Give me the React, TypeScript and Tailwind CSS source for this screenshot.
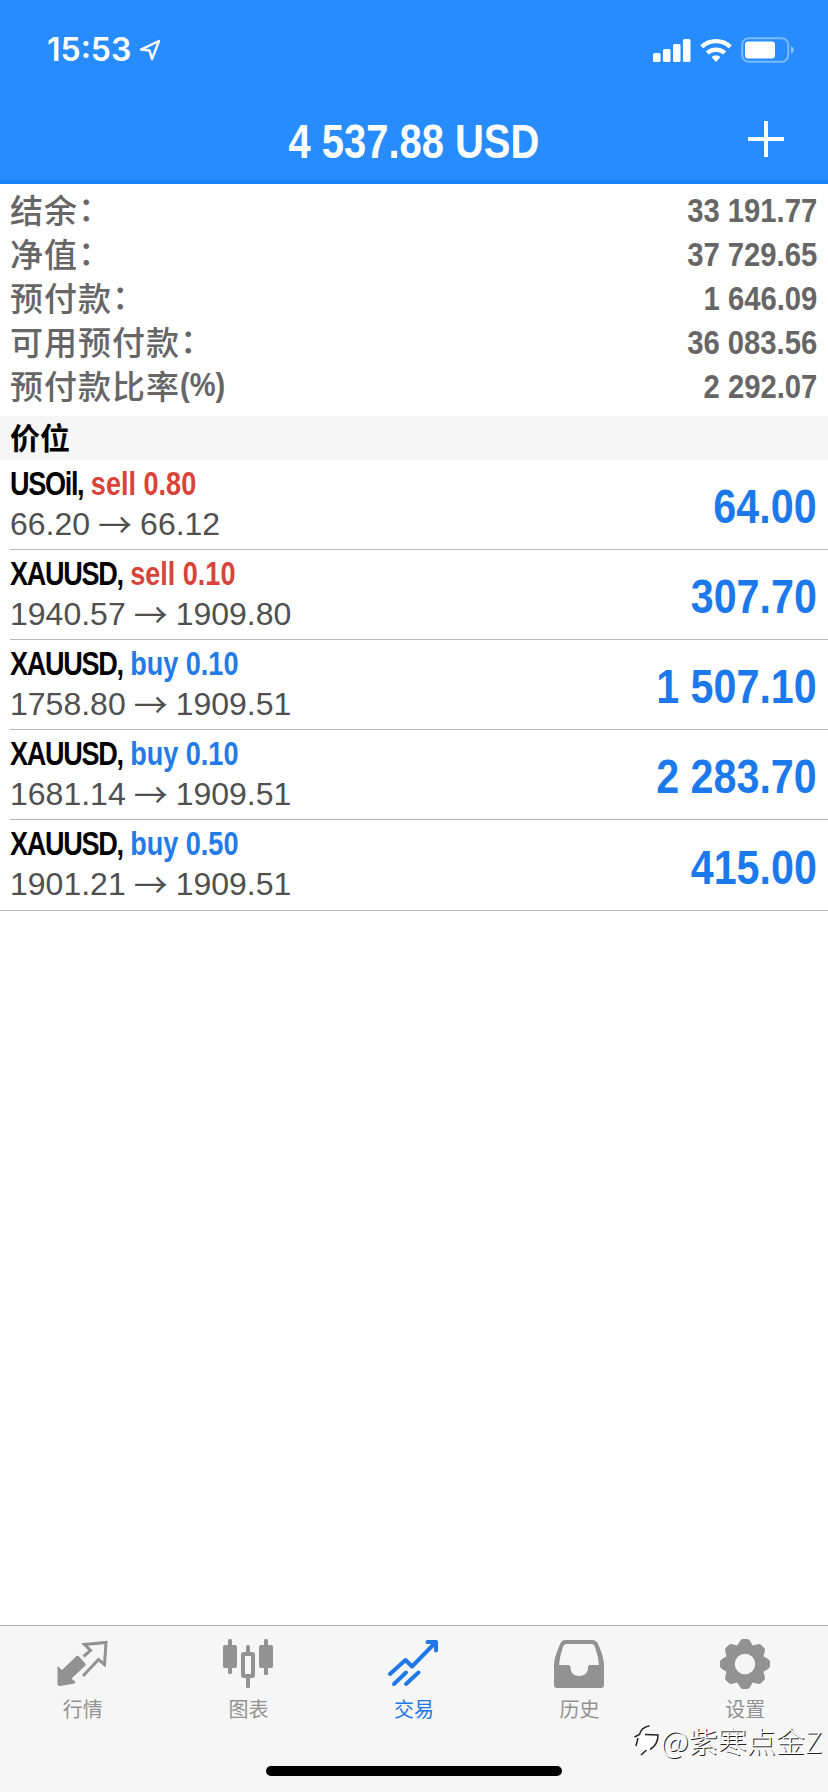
import type { ReactNode } from 'react';
import { clsx } from 'clsx';

type Side = 'sell' | 'buy';

interface Position {
  symbol: string;
  side: Side;
  volume: string;
  open: string;
  current: string;
  profit: string;
}

interface Tab {
  label: string;
  icon: ReactNode;
  active?: boolean;
}

// condensed bold face used for every amount and symbol
const condensed = "inline-block whitespace-nowrap font-['Liberation_Sans',sans-serif] font-bold";

const summary = [
  { label: '结余', suffix: '：', value: '33 191.77' },
  { label: '净值', suffix: '：', value: '37 729.65' },
  { label: '预付款', suffix: '：', value: '1 646.09' },
  { label: '可用预付款', suffix: '：', value: '36 083.56' },
  { label: '预付款比率', suffix: '(%)', value: '2 292.07' },
];

const positions: Position[] = [
  { symbol: 'USOil', side: 'sell', volume: '0.80', open: '66.20', current: '66.12', profit: '64.00' },
  { symbol: 'XAUUSD', side: 'sell', volume: '0.10', open: '1940.57', current: '1909.80', profit: '307.70' },
  { symbol: 'XAUUSD', side: 'buy', volume: '0.10', open: '1758.80', current: '1909.51', profit: '1 507.10' },
  { symbol: 'XAUUSD', side: 'buy', volume: '0.10', open: '1681.14', current: '1909.51', profit: '2 283.70' },
  { symbol: 'XAUUSD', side: 'buy', volume: '0.50', open: '1901.21', current: '1909.51', profit: '415.00' },
];

const sideColor: Record<Side, string> = {
  sell: 'text-[#d8443a]',
  buy: 'text-[#237be8]',
};

function QuotesIcon() {
  return (
    <svg className="h-[52px] w-[52px]" viewBox="0 -7 52 52" fill="none">
      <path d="M0.500 22 L5 26 L19 12.500 Q20.500 11 22 12.500 L28 19 Q29.500 20.500 28 22 L14.500 34.500 L18.500 38 L17.500 39.500 L3 42 Q0.500 42 0.500 39.500 Z" fill="currentColor" />
      <path d="M26.500 12.500 L33.500 6.500 L27.500 0.500 L49 -1.500 L47.500 20.500 L41.500 15.500 L26 32" stroke="currentColor" strokeWidth="3" />
    </svg>
  );
}

function ChartIcon() {
  return (
    <svg className="h-[52px] w-[52px]" viewBox="0 -7 52 52" fill="none">
      <g fill="currentColor">
        <rect x="6" y="-5" width="4" height="35" rx="1.500" />
        <rect x="1" y="1" width="14" height="23" rx="2" />
        <rect x="42" y="-5" width="4" height="36" rx="1.500" />
        <rect x="37" y="1" width="14" height="23" rx="2" />
        <rect x="24" y="1" width="4" height="8" rx="1.500" />
        <rect x="24" y="33" width="4" height="11" rx="1.500" />
      </g>
      <rect x="21" y="10" width="10" height="22" rx="1" stroke="currentColor" strokeWidth="4" />
    </svg>
  );
}

function TradeIcon() {
  return (
    <svg className="h-[52px] w-[52px]" viewBox="0 -7 52 52" fill="none" stroke="currentColor" strokeWidth="4" strokeLinecap="round" strokeLinejoin="round">
      <path d="M2 30 L17.500 16 L24 22.500 L47 -1" />
      <path d="M39.500 -2 H48 V6.500" />
      <path d="M6 40 L18 28.500" />
      <path d="M18 40 L30.500 28.500" />
      <path d="M42 -2 H48 V4 Z" fill="currentColor" stroke="none" />
    </svg>
  );
}

function HistoryIcon() {
  return (
    <svg className="h-[52px] w-[52px]" viewBox="0 -7 52 52">
      <path
        fillRule="evenodd"
        fill="currentColor"
        d="M12 -4 H38 Q42 -4 43.500 -1 C47.500 7 50 15 50 22 V41 Q50 44 47 44 H3 Q0 44 0 41 V22 C0 15 3 7 6.500 -1 Q8 -4 12 -4 Z M12.500 0 H37.500 Q40 0 41 3 Q44 11 45 21 H36.500 Q34 21 34 23.500 C34 28.500 30.500 32 25 32 C20 32 16.500 28.500 16.500 23.500 Q16.500 21 14 21 H5 Q6 11 9 3 Q10 0 12.500 0 Z"
      />
    </svg>
  );
}

function SettingsIcon() {
  return (
    <svg className="h-[52px] w-[52px]" viewBox="-26 -27 52 52">
      <g fill="currentColor">
        {[0, 45, 90, 135, 180, 225, 270, 315].map((angle) => (
          <path key={angle} transform={`rotate(${angle})`} d="M-8.500 -17 L-5 -23 Q-4 -25 -2 -25 H2 Q4 -25 5 -23 L8.500 -17 Z" />
        ))}
      </g>
      <circle r="15" fill="none" stroke="currentColor" strokeWidth="9.500" />
    </svg>
  );
}

const tabs: Tab[] = [
  { label: '行情', icon: <QuotesIcon /> },
  { label: '图表', icon: <ChartIcon /> },
  { label: '交易', icon: <TradeIcon />, active: true },
  { label: '历史', icon: <HistoryIcon /> },
  { label: '设置', icon: <SettingsIcon /> },
];

function StatusBar() {
  return (
    <div className="flex h-[100px] items-center justify-between pr-[33px] pl-[47px] text-white">
      <div className="flex items-center gap-2">
        <span className="font-['Inter',sans-serif] text-[32px] leading-none font-semibold">15:53</span>
        <svg className="h-[22px] w-[22px]" viewBox="0 0 22 22" fill="none" stroke="currentColor" strokeWidth="2.400" strokeLinejoin="round">
          <path d="M20 2 L2 10.500 L10.500 11.500 L13 20 Z" />
        </svg>
      </div>
      <div className="flex items-center">
        <svg className="h-6 w-[38px]" viewBox="0 0 38 24" fill="currentColor">
          <rect x="0" y="15" width="7.500" height="9" rx="1.500" />
          <rect x="10" y="11" width="7.500" height="13" rx="1.500" />
          <rect x="20" y="6" width="7.500" height="18" rx="1.500" />
          <rect x="30" y="1" width="7.500" height="23" rx="1.500" />
        </svg>
        <svg className="ml-[9px] h-6 w-8" viewBox="0 0 32 24" fill="none" stroke="currentColor" strokeWidth="4.400">
          <path d="M1.800 8.800 A20.500 20.500 0 0 1 30.200 8.800" />
          <path d="M7.300 15 A12.800 12.800 0 0 1 24.700 15" />
          <path d="M11.500 19 Q16 15.500 20.500 19 L16 24 Z" fill="currentColor" stroke="none" />
        </svg>
        <svg className="ml-[9px] h-[26px] w-[54px]" viewBox="0 0 54 26">
          <rect x="1.200" y="1.200" width="46" height="23.600" rx="6.500" fill="none" stroke="white" strokeOpacity="0.400" strokeWidth="2" />
          <rect x="4" y="4.500" width="30" height="17" rx="3" fill="white" />
          <path d="M50 9 Q53 10.500 53 13 Q53 15.500 50 17 Z" fill="white" fillOpacity="0.450" />
        </svg>
      </div>
    </div>
  );
}

function PositionRow({ position, last }: { position: Position; last: boolean }) {
  return (
    <li className={last ? 'border-b border-[#b9b9bb]' : 'ml-2.5'}>
      <div
        className={clsx(
          'flex h-[90px] items-center justify-between pr-[11px]',
          last ? 'pl-2.5' : 'border-b border-[#b9b9bb]'
        )}
      >
        <div className="pb-0.5">
          <p className={clsx(condensed, 'block origin-left scale-x-[0.82] text-[33px] leading-10 text-black')}>
            <span className="tracking-[-1.6px]">{position.symbol},</span>{' '}
            <span className={sideColor[position.side]}>
              {position.side} {position.volume}
            </span>
          </p>
          <p className="flex items-center font-['Liberation_Sans',sans-serif] text-[32px] leading-10 text-[#505050]">
            {position.open}
            <span className="mx-2 font-['Noto_Sans_CJK_SC',sans-serif] text-[34px] font-normal">→</span>
            {position.current}
          </p>
        </div>
        <span className={clsx(condensed, 'origin-right scale-x-[0.842] pt-1 text-[49px] leading-none text-[#1c79ec]')}>
          {position.profit}
        </span>
      </div>
    </li>
  );
}

export default function App() {
  return (
    <div className="relative flex h-[1792px] w-[828px] flex-col overflow-hidden bg-white font-['Liberation_Sans','Noto_Sans_CJK_SC',sans-serif]">
      <header className="h-[184px] shrink-0 border-b-4 border-[#1a84fb] bg-[#268cff]">
        <StatusBar />
        <div className="grid h-20 grid-cols-[1fr_auto_1fr] items-center text-white">
          <h1 className={clsx(condensed, 'col-start-2 scale-x-[0.815] pt-0.5 text-[49px] leading-none')}>4 537.88 USD</h1>
          <svg className="mr-[44px] mb-0.5 h-9 w-9 justify-self-end" viewBox="0 0 36 36" stroke="currentColor" strokeWidth="4">
            <path d="M18 0 V36 M0 18 H36" />
          </svg>
        </div>
      </header>

      <dl className="shrink-0 pt-1 pr-[11px] pb-2 pl-2.5 text-[#666666]">
        {summary.map((item) => (
          <div key={item.label} className="flex h-11 items-center justify-between">
            <dt className="flex items-center pb-0.5 font-['Noto_Sans_CJK_SC',sans-serif] text-[33px] leading-[42px] font-medium tracking-[1px]">
              {item.label}
              {item.suffix === '：' ? (
                <span className="-translate-y-0.5">：</span>
              ) : (
                <span className={clsx(condensed, 'origin-left scale-x-[0.88] text-[33px] tracking-normal')}>{item.suffix}</span>
              )}
            </dt>
            <dd className={clsx(condensed, 'origin-right scale-x-[0.86] text-[34px] leading-[44px]')}>{item.value}</dd>
          </div>
        ))}
      </dl>

      <h2 className="h-11 shrink-0 bg-[#f6f6f6] pl-2.5 font-['Noto_Sans_CJK_SC',sans-serif] text-[30px] leading-[41px] font-bold text-black">
        价位
      </h2>

      <ul className="flex-1">
        {positions.map((position, index) => (
          <PositionRow key={index} position={position} last={index === positions.length - 1} />
        ))}
      </ul>

      <nav className="flex h-[167px] shrink-0 flex-col items-center border-t border-[#b0b0b0] bg-[#f6f6f6]">
        <div className="grid w-full grid-cols-5 pt-[11px]">
          {tabs.map((tab) => (
            <div key={tab.label} className={clsx('flex flex-col items-center', tab.active ? 'text-[#2078e8]' : 'text-[#929292]')}>
              {tab.icon}
              <span className="mt-1.5 font-['Noto_Sans_CJK_SC',sans-serif] text-[20px] leading-7">{tab.label}</span>
            </div>
          ))}
        </div>
        <div className="mt-auto mb-4 h-2.5 w-[296px] rounded-full bg-black" />
      </nav>

      <div className="absolute right-[6px] bottom-8 flex items-center text-white">
        <svg className="h-8 w-7" viewBox="0 0 28 32" fill="none">
          <path d="M4 13 Q7 3 16 2 L19 3 L16 9 L26 11 Q26 22 17 26 L10 30 L12 25 Q3 23 4 13 Z" fill="white" />
          <path d="M2.500 13 L7.500 10.500 Q9.500 3 17.500 2 M13 10.500 L26 11 Q26 21 18 25.500 M9 31 L14.500 26 M6 14 L4 22" stroke="#222" strokeWidth="1.500" />
        </svg>
        <span className="font-['Noto_Sans_CJK_SC',sans-serif] text-[31px] leading-10 font-light [text-shadow:1px_1px_0_#222]">@</span>
        <span className="font-['Noto_Sans_CJK_SC',sans-serif] text-[29px] leading-10 font-light [text-shadow:1px_1px_0_#222]">紫寒点金Z</span>
      </div>
    </div>
  );
}
